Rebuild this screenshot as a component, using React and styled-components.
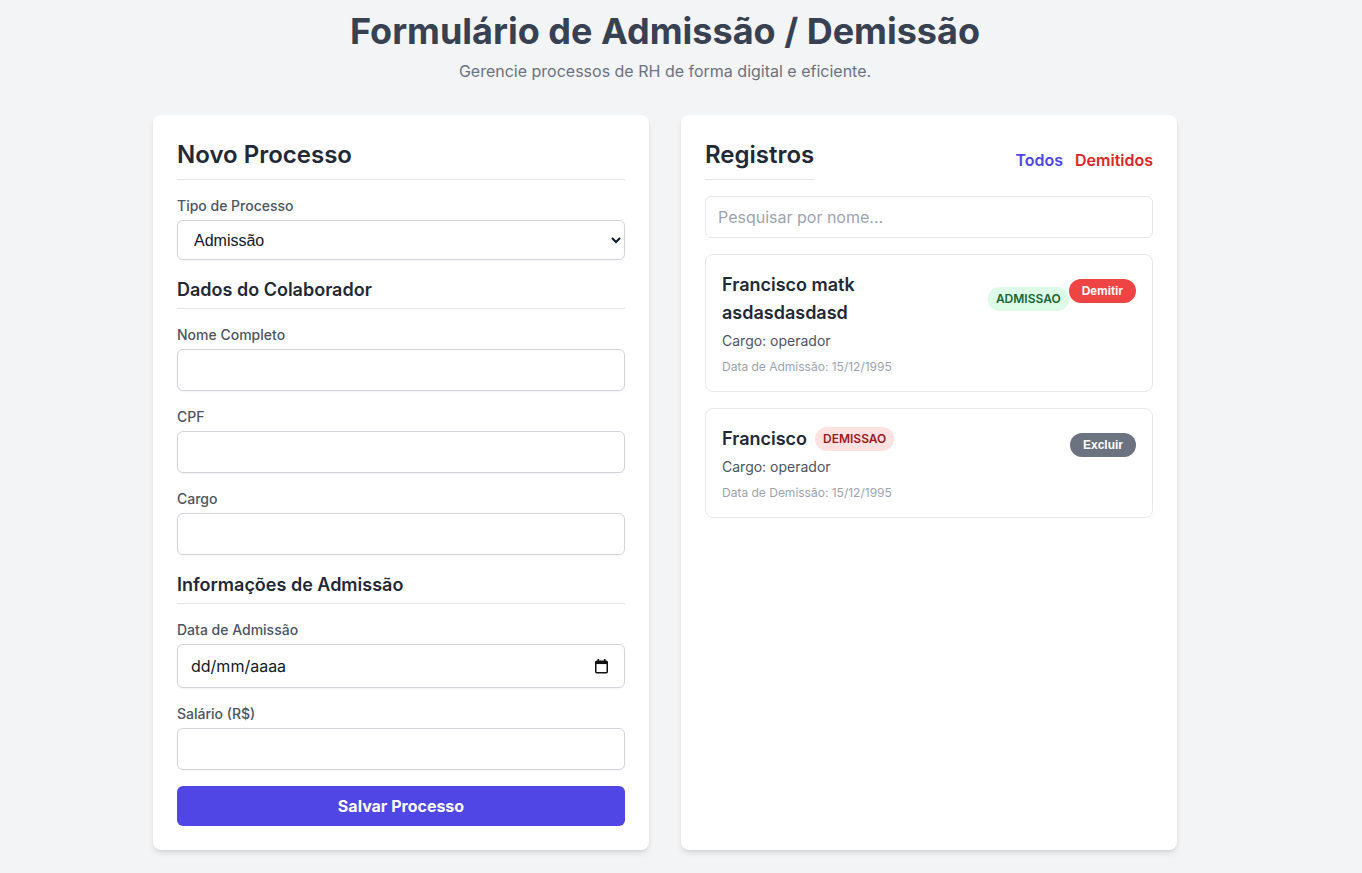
import React from 'react';
import styled, { createGlobalStyle } from 'styled-components';

const GlobalStyle = createGlobalStyle`
    * { box-sizing: border-box; }
    body {
        margin: 0;
        background-color: #f3f4f6;
        font-family: Inter, "Noto Sans", sans-serif;
        color: #1f2937;
    }
`;

const registros = [
    { id: 1, nome: 'Francisco matk asdasdasdasd', tipo: 'ADMISSAO', cargo: 'operador', dataLabel: 'Data de Admissão', data: '15/12/1995', acao: 'Demitir' },
    { id: 2, nome: 'Francisco', tipo: 'DEMISSAO', cargo: 'operador', dataLabel: 'Data de Demissão', data: '15/12/1995', acao: 'Excluir' },
];

const CalendarIcon = () => (
    <svg width="13" height="15" viewBox="0 0 13 15">
        <rect x="2.5" y="0" width="1.6" height="3" fill="#111" />
        <rect x="8.9" y="0" width="1.6" height="3" fill="#111" />
        <rect x="0.75" y="2.25" width="11.5" height="11.5" rx="1" fill="none" stroke="#111" strokeWidth="1.5" />
        <rect x="0.75" y="2.25" width="11.5" height="2.8" fill="#111" />
    </svg>
);

const App = () => {
    return (
        <Page>
            <GlobalStyle />
            <Header>
                <Title>Formulário de Admissão / Demissão</Title>
                <Subtitle>Gerencie processos de RH de forma digital e eficiente.</Subtitle>
            </Header>
            <Grid>
                <Card>
                    <CardTitle>Novo Processo</CardTitle>
                    <Form>
                        <Field>
                            <Label>Tipo de Processo</Label>
                            <Select defaultValue="admissao">
                                <option value="admissao">Admissão</option>
                                <option value="demissao">Demissão</option>
                            </Select>
                        </Field>
                        <SectionTitle>Dados do Colaborador</SectionTitle>
                        <Field>
                            <Label>Nome Completo</Label>
                            <Input type="text" />
                        </Field>
                        <Field>
                            <Label>CPF</Label>
                            <Input type="text" />
                        </Field>
                        <Field>
                            <Label>Cargo</Label>
                            <Input type="text" />
                        </Field>
                        <SectionTitle>Informações de Admissão</SectionTitle>
                        <Field>
                            <Label>Data de Admissão</Label>
                            <DateBox>
                                <DateText type="text" defaultValue="dd/mm/aaaa" />
                                <CalendarIcon />
                            </DateBox>
                        </Field>
                        <Field>
                            <Label>Salário (R$)</Label>
                            <Input type="text" />
                        </Field>
                        <SubmitButton type="button">Salvar Processo</SubmitButton>
                    </Form>
                </Card>

                <Card>
                    <ListHeader>
                        <CardTitle inline>Registros</CardTitle>
                        <Filters>
                            <FilterLink color="#4f46e5">Todos</FilterLink>
                            <FilterLink color="#dc2626">Demitidos</FilterLink>
                        </Filters>
                    </ListHeader>
                    <Search type="text" placeholder="Pesquisar por nome..." />
                    <RecordList>
                        {registros.map((r) => (
                            <Record key={r.id}>
                                <RecordTop>
                                    <NameRow>
                                        <RecordName>{r.nome}</RecordName>
                                        <Badge tipo={r.tipo}>{r.tipo}</Badge>
                                    </NameRow>
                                    <ActionButton danger={r.acao === 'Demitir'}>{r.acao}</ActionButton>
                                </RecordTop>
                                <Cargo>Cargo: {r.cargo}</Cargo>
                                <DateInfo>{r.dataLabel}: {r.data}</DateInfo>
                            </Record>
                        ))}
                    </RecordList>
                </Card>
            </Grid>
        </Page>
    );
};

export default App;

const Page = styled.div`
    padding: 11px 32px 23px 0;
`;

const Header = styled.header`
    text-align: center;
    margin-bottom: 32px;
`;

const Title = styled.h1`
    margin: 0;
    font-size: 36px;
    line-height: 40px;
    font-weight: 700;
    color: #374151;
`;

const Subtitle = styled.p`
    margin: 8px 0 0;
    font-size: 16px;
    line-height: 24px;
    color: #6b7280;
`;

const Grid = styled.div`
    max-width: 1024px;
    margin: 0 auto;
    display: grid;
    grid-template-columns: 1fr 1fr;
    gap: 32px;
    align-items: stretch;
`;

const Card = styled.section`
    background: #ffffff;
    border-radius: 8px;
    padding: 24px;
    box-shadow: 0 4px 6px -1px rgba(0, 0, 0, 0.1), 0 2px 4px -2px rgba(0, 0, 0, 0.1);
`;

const CardTitle = styled.h2`
    display: ${(p) => (p.inline ? 'inline-block' : 'block')};
    margin: 0 0 ${(p) => (p.inline ? '0' : '16px')};
    padding-bottom: 8px;
    border-bottom: 1px solid #e5e7eb;
    font-size: 24px;
    line-height: 32px;
    font-weight: 600;
    color: #1f2937;
`;

const Form = styled.form`
    display: flex;
    flex-direction: column;
    gap: 16px;
`;

const Field = styled.div`
    display: flex;
    flex-direction: column;
`;

const Label = styled.label`
    font-size: 14px;
    line-height: 20px;
    font-weight: 500;
    color: #4b5563;
    margin-bottom: 4px;
`;

const Select = styled.select`
    height: 40px;
    width: 100%;
    padding: 0 8px 0 12px;
    border: 1px solid #d1d5db;
    border-radius: 6px;
    background: #ffffff;
    font-family: "Liberation Sans", Arial, sans-serif;
    font-size: 16px;
    color: #111827;
    box-shadow: 0 1px 2px rgba(0, 0, 0, 0.05);
`;

const SectionTitle = styled.h3`
    margin: 0;
    padding-bottom: 4px;
    border-bottom: 1px solid #e5e7eb;
    font-size: 18px;
    line-height: 28px;
    font-weight: 600;
    color: #1f2937;
`;

const Input = styled.input`
    height: 42px;
    width: 100%;
    padding: 8px 12px;
    border: 1px solid #d1d5db;
    border-radius: 6px;
    font-family: Inter, sans-serif;
    font-size: 16px;
    color: #111827;
    box-shadow: 0 1px 2px rgba(0, 0, 0, 0.05);
    outline: none;
`;

const DateBox = styled.div`
    height: 44px;
    display: flex;
    align-items: center;
    padding: 0 16px 0 13px;
    border: 1px solid #d1d5db;
    border-radius: 6px;
    background: #ffffff;
    box-shadow: 0 1px 2px rgba(0, 0, 0, 0.05);
`;

const DateText = styled.input`
    flex: 1;
    border: 0;
    padding: 0;
    outline: none;
    font-family: Inter, sans-serif;
    font-size: 16px;
    color: #111827;
    background: transparent;
`;

const SubmitButton = styled.button`
    height: 40px;
    width: 100%;
    border: 0;
    border-radius: 6px;
    background: #4f46e5;
    color: #ffffff;
    font-family: Inter, sans-serif;
    font-size: 16px;
    font-weight: 700;
    cursor: pointer;
`;

const ListHeader = styled.div`
    display: flex;
    justify-content: space-between;
    align-items: center;
    margin-bottom: 16px;
`;

const Filters = styled.div`
    display: flex;
    gap: 12px;
    padding-top: 1px;
`;

const FilterLink = styled.a`
    font-size: 16px;
    line-height: 24px;
    font-weight: 600;
    color: ${(p) => p.color};
    cursor: pointer;
`;

const Search = styled.input`
    width: 100%;
    height: 42px;
    padding: 8px 12px;
    border: 1px solid #e5e7eb;
    border-radius: 6px;
    font-family: Inter, sans-serif;
    font-size: 16px;
    color: #111827;
    outline: none;
    margin-bottom: 16px;
    &::placeholder {
        color: #9ca3af;
    }
`;

const RecordList = styled.div`
    display: flex;
    flex-direction: column;
    gap: 16px;
`;

const Record = styled.div`
    border: 1px solid #e5e7eb;
    border-radius: 8px;
    padding: 16px;
`;

const RecordTop = styled.div`
    display: flex;
    justify-content: space-between;
    align-items: flex-start;
`;

const NameRow = styled.div`
    display: flex;
    align-items: center;
    gap: 8px;
`;

const RecordName = styled.h4`
    margin: 0;
    font-size: 18px;
    line-height: 28px;
    font-weight: 600;
    color: #1f2937;
`;

const Badge = styled.span`
    flex-shrink: 0;
    padding: 4px 8px;
    border-radius: 9999px;
    font-size: 12px;
    line-height: 16px;
    font-weight: 600;
    background: ${(p) => (p.tipo === 'ADMISSAO' ? '#dcfce7' : '#fee2e2')};
    color: ${(p) => (p.tipo === 'ADMISSAO' ? '#166534' : '#991b1b')};
`;

const ActionButton = styled.button`
    flex-shrink: 0;
    margin: 8px 0 -4px;
    height: 24px;
    padding: 0 13px;
    border: 0;
    border-radius: 9999px;
    background: ${(p) => (p.danger ? '#ef4444' : '#6b7280')};
    color: #ffffff;
    font-family: "Liberation Sans", Arial, sans-serif;
    font-size: 12px;
    font-weight: 700;
    cursor: pointer;
`;

const Cargo = styled.p`
    margin: 4px 0 0;
    font-size: 14px;
    line-height: 20px;
    color: #4b5563;
`;

const DateInfo = styled.p`
    margin: 8px 0 0;
    font-size: 12px;
    line-height: 16px;
    color: #9ca3af;
`;
